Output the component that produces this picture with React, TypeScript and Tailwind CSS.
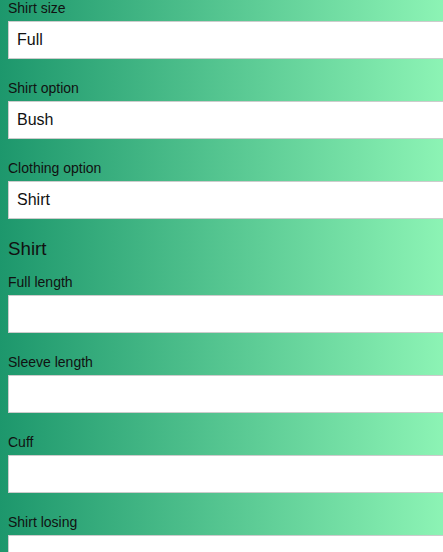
const topFields = [
  { label: 'Shirt size', value: 'Full' },
  { label: 'Shirt option', value: 'Bush' },
  { label: 'Clothing option', value: 'Shirt' },
]

const shirtFields = ['Full length', 'Sleeve length', 'Cuff', 'Shirt losing']

function Field({ label, value = '' }: { label: string; value?: string }) {
  return (
    <div className="mb-[21px]">
      <label className="mb-[5px] block h-[16px] text-[14px] leading-[16px] text-[#111]">{label}</label>
      <input
        type="text"
        defaultValue={value}
        className="box-content block h-[36px] w-full border border-[#cccccc] bg-white px-2 text-[16px] text-[#111] outline-none"
      />
    </div>
  )
}

export default function App() {
  return (
    <div
      className="min-h-screen w-full overflow-hidden bg-[linear-gradient(to_right,#1d976c,#93f9b9_106%)] pl-2"
      style={{ fontFamily: '"Liberation Sans", Arial, sans-serif' }}
    >
      {topFields.map((f) => (
        <Field key={f.label} label={f.label} value={f.value} />
      ))}
      <h3 className="mb-4 text-[18.72px] leading-[18px] text-[#111]">Shirt</h3>
      {shirtFields.map((l) => (
        <Field key={l} label={l} />
      ))}
    </div>
  )
}
